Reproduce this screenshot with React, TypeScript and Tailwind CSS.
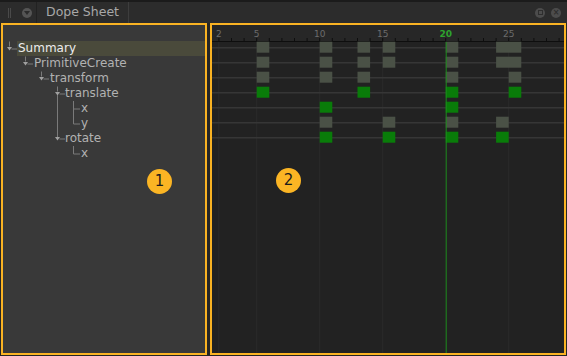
const FONT = "font-['DejaVu_Sans',sans-serif]"

const fx = (f: number) => 44.7 + (f - 5) * 12.6

type Key = { f: number; w?: number; green?: boolean }

const rows: Key[][] = [
  [{ f: 5 }, { f: 10 }, { f: 13 }, { f: 15 }, { f: 20 }, { f: 24, w: 2 }],
  [{ f: 5 }, { f: 10 }, { f: 13 }, { f: 15 }, { f: 20 }, { f: 24, w: 2 }],
  [{ f: 5 }, { f: 10 }, { f: 13 }, { f: 20 }, { f: 25 }],
  [{ f: 5, green: true }, { f: 13, green: true }, { f: 20, green: true }, { f: 25, green: true }],
  [{ f: 10, green: true }, { f: 20, green: true }],
  [{ f: 10 }, { f: 15 }, { f: 20 }, { f: 24 }],
  [{ f: 10, green: true }, { f: 15, green: true }, { f: 20, green: true }, { f: 24, green: true }],
]

const tree = [
  { label: "Summary", pl: "pl-[14px]", top: true },
  { label: "PrimitiveCreate", pl: "pl-[30px]" },
  { label: "transform", pl: "pl-[46px]" },
  { label: "translate", pl: "pl-[61px]" },
  { label: "x", pl: "pl-[77px]" },
  { label: "y", pl: "pl-[77px]" },
  { label: "rotate", pl: "pl-[61px]" },
  { label: "x", pl: "pl-[77px]" },
]

function Arrow({ x, y }: { x: number; y: number }) {
  return (
    <g>
      <line x1={x} y1={y - 7} x2={x} y2={y - 2} stroke="#7a7a7a" />
      <line x1={x + 2} y1={y + 0.5} x2={x + 7.5} y2={y + 0.5} stroke="#7a7a7a" />
      <polygon points={`${x - 2.5},${y - 1.5} ${x + 2.5},${y - 1.5} ${x},${y + 2}`} fill="#a0a0a0" />
    </g>
  )
}

function TreeLines() {
  // coords relative to inner panel (abs - 3, abs - 25)
  return (
    <svg className="absolute left-0 top-0" width="202" height="150">
      <Arrow x={6.5} y={23.5} />
      <Arrow x={22.5} y={38.5} />
      <Arrow x={38.5} y={53.5} />
      <Arrow x={54.5} y={68.5} />
      <line x1={54.5} y1={70} x2={54.5} y2={114} stroke="#7a7a7a" />
      <Arrow x={54.5} y={113.5} />
      <line x1={70.5} y1={76} x2={70.5} y2={99} stroke="#7a7a7a" />
      <line x1={70.5} y1={84} x2={77} y2={84} stroke="#7a7a7a" />
      <line x1={70.5} y1={99} x2={77} y2={99} stroke="#7a7a7a" />
      <line x1={70.5} y1={121} x2={70.5} y2={129} stroke="#7a7a7a" />
      <line x1={70.5} y1={129} x2={77} y2={129} stroke="#7a7a7a" />
    </svg>
  )
}

function Timeline() {
  const ticks = Array.from({ length: 28 }, (_, i) => i + 2)
  const labels = [2, 5, 10, 15, 20, 25]
  return (
    <svg width="352" height="328" className="block">
      <rect x="0" y="0" width="352" height="16" fill="#272727" />
      <line x1="0" y1="16.5" x2="352" y2="16.5" stroke="#0e0e0e" />
      {ticks.map((f) => (
        <line key={f} x1={fx(f)} y1="13" x2={fx(f)} y2="16" stroke="#0e0e0e" />
      ))}
      {labels.map((f) => (
        <text
          key={f}
          x={fx(f)}
          y="11.5"
          textAnchor="middle"
          fontSize="9"
          fontFamily="DejaVu Sans, sans-serif"
          fontWeight={f === 20 ? "bold" : "normal"}
          fill={f === 20 ? "#2ea22e" : "#6c6c6c"}
        >
          {f}
        </text>
      ))}
      {[2, 5, 10, 15, 25].map((f) => (
        <line key={f} x1={fx(f)} y1="17" x2={fx(f)} y2="328" stroke="#2b2b2b" />
      ))}
      {rows.map((_, i) => (
        <line key={i} x1="0" y1={22.7 + 15 * i} x2="352" y2={22.7 + 15 * i} stroke="#363636" strokeWidth="1.6" />
      ))}
      {rows.map((keys, i) =>
        keys.map((k) => (
          <rect
            key={`${i}-${k.f}`}
            x={fx(k.f)}
            y={16.7 + 15 * i}
            width={12.6 * (k.w ?? 1)}
            height="11"
            fill={k.green ? "#097c09" : "#4a5146"}
          />
        ))
      )}
      <line x1={fx(20) + 0.5} y1="17" x2={fx(20) + 0.5} y2="328" stroke="#1e8c1e" />
    </svg>
  )
}

export default function App() {
  return (
    <div className={`relative w-[567px] h-[356px] bg-[#262626] overflow-hidden ${FONT}`}>
      {/* header */}
      <div className="h-[23px] flex items-center bg-[#2c2c2c] border-t-2 border-[#1b1b1b]">
        <div className="ml-[8px] flex gap-[1px] h-[10px]">
          <span className="w-[1px] bg-[#4a4a4a]" />
          <span className="w-[1px] bg-[#4a4a4a]" />
        </div>
        <div className="ml-[11px] w-[10px] h-[10px] rounded-full bg-[#555] flex items-center justify-center">
          <span className="w-0 h-0 border-l-[3px] border-r-[3px] border-t-[4px] border-l-transparent border-r-transparent border-t-[#2c2c2c]" />
        </div>
        <div className="ml-[4px] h-full flex items-center border-l border-[#222] border-r border-r-[#3d3d3d] pl-[9px] pr-[9px]">
          <span className="text-[12.5px] text-[#a8a8a8]">Dope Sheet</span>
        </div>
        <div className="ml-auto mr-[6px] flex gap-[6px]">
          <div className="w-[10px] h-[10px] rounded-full bg-[#4c4c4c] flex items-center justify-center">
            <span className="w-[5px] h-[5px] border border-[#2e2e2e]" />
          </div>
          <div className="w-[10px] h-[10px] rounded-full bg-[#4c4c4c] flex items-center justify-center text-[8px] leading-none text-[#2e2e2e] font-bold">
            ×
          </div>
        </div>
      </div>

      {/* body */}
      <div className="flex h-[332px] pl-[1px] gap-[3px]">
        <div className="relative w-[206px] h-full border-2 border-[#fab323] bg-[#393939] pt-[16px]">
          <TreeLines />
          {tree.map((r, i) => (
            <div key={i} className={`h-[15px] ${r.pl} flex`}>
              <div
                className={`flex-1 pl-[1px] text-[12px] leading-[15px] ${
                  r.top ? "bg-[#4a4a3b] text-[#ececec]" : "text-[#b2b2b2]"
                }`}
              >
                {r.label}
              </div>
            </div>
          ))}
        </div>
        <div className="w-[356px] h-full border-2 border-[#fab323] bg-[#222]">
          <Timeline />
        </div>
      </div>

      {/* callouts */}
      <div className="absolute left-[147px] top-[169px] w-[25px] h-[25px] rounded-full bg-[#fbb524] flex items-center justify-center text-[15px] text-[#1c1c1c]">
        1
      </div>
      <div className="absolute left-[276px] top-[168px] w-[25px] h-[25px] rounded-full bg-[#fbb524] flex items-center justify-center text-[15px] text-[#1c1c1c]">
        2
      </div>
    </div>
  )
}
